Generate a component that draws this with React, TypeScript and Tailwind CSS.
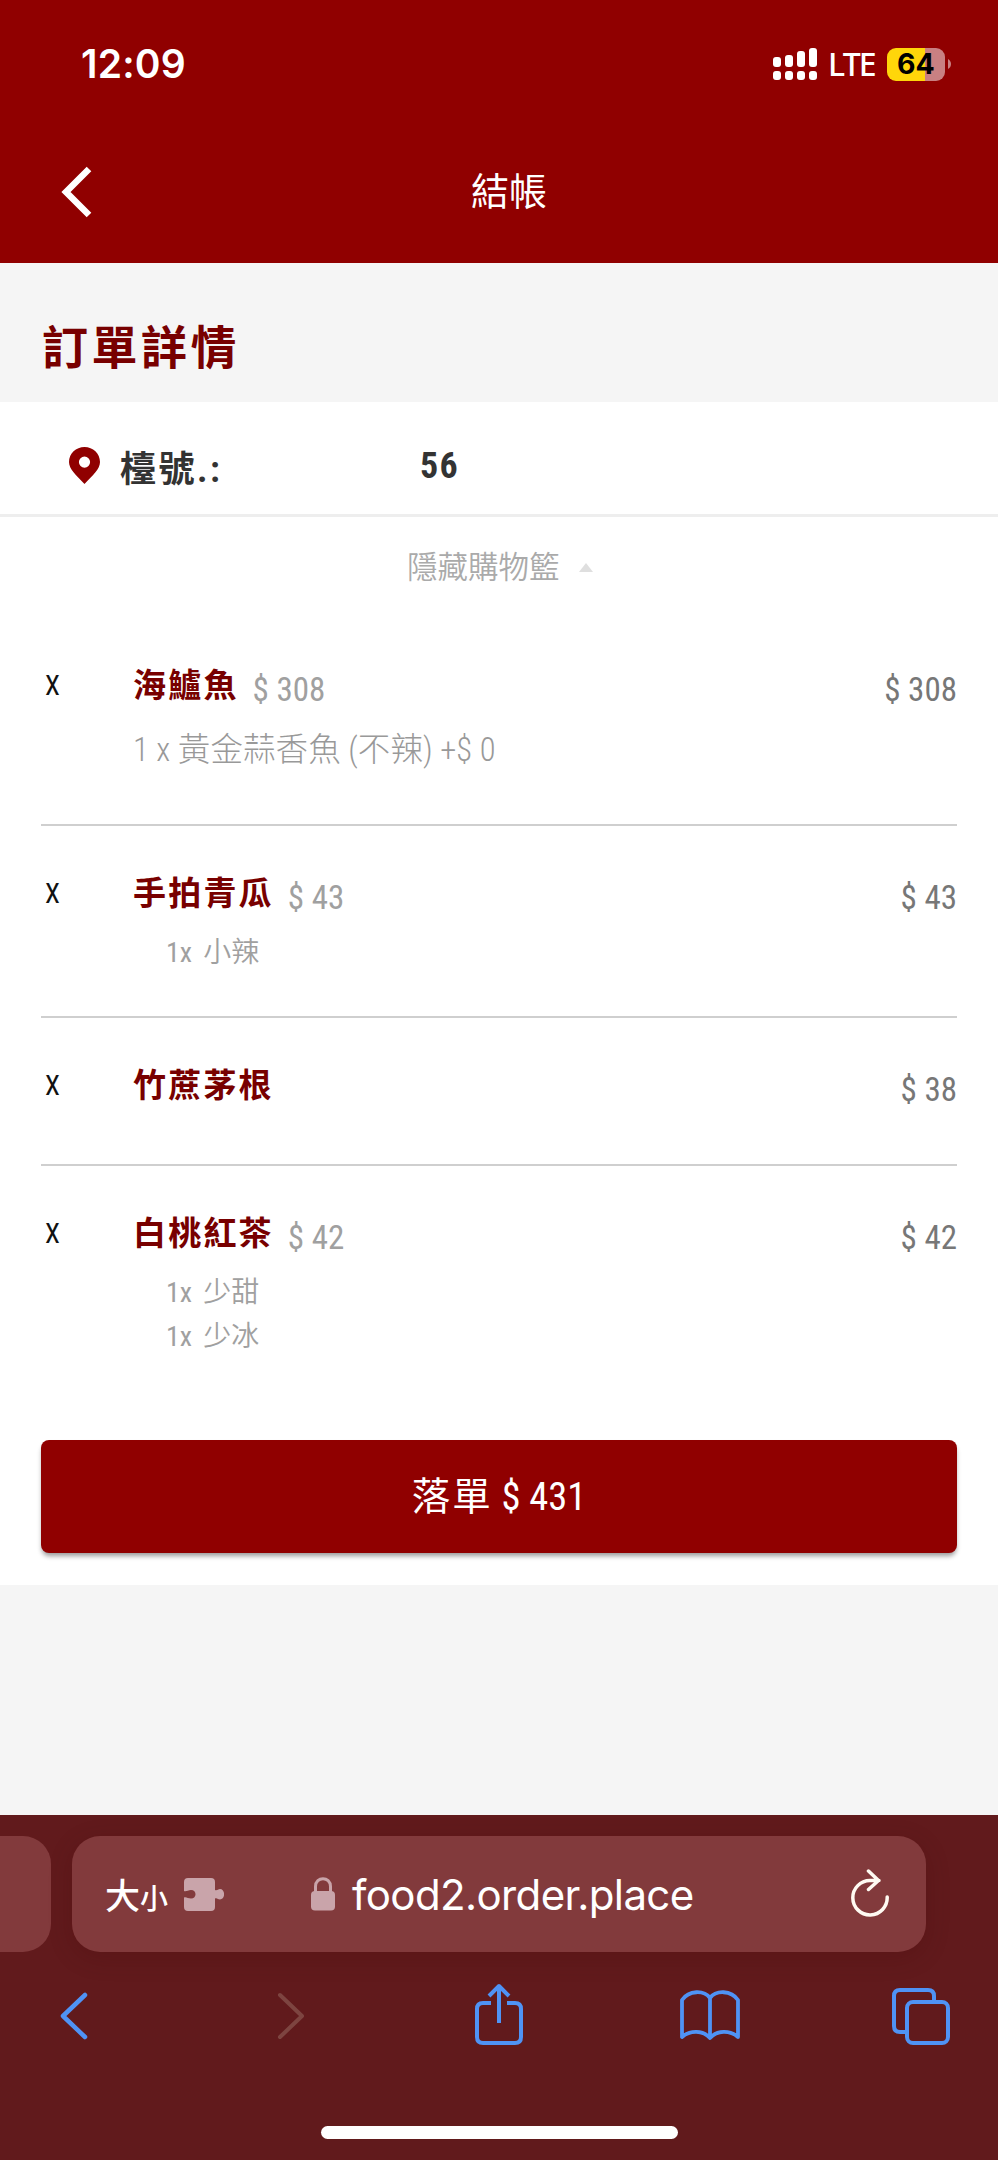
import React from 'react';

interface OrderItem {
  name: string;
  unitPrice?: string;
  total: string;
  note?: string;
  options?: string[];
}

const items: OrderItem[] = [
  { name: '海鱸魚', unitPrice: '$ 308', total: '$ 308', note: '1 x 黃金蒜香魚 (不辣) +$ 0' },
  { name: '手拍青瓜', unitPrice: '$ 43', total: '$ 43', options: ['小辣'] },
  { name: '竹蔗茅根', total: '$ 38' },
  { name: '白桃紅茶', unitPrice: '$ 42', total: '$ 42', options: ['少甜', '少冰'] },
];

// Signal columns: top of each upper bar inside the 32px tall icon
const signalBars = [9, 7, 3, 0];

function StatusBar() {
  return (
    <div className="flex h-[128px] items-center justify-between pl-[81px] pr-[47px] font-['Inter',sans-serif]">
      <span className="mb-[2px] text-[39px] font-semibold leading-none tracking-[0.2px]">12:09</span>
      <div className="flex items-center">
        <svg width="44" height="32" viewBox="0 0 44 32" fill="white">
          {signalBars.map((top, i) => (
            <g key={top}>
              <rect x={i * 12} y={top} width="8" height={19 - top} rx="3" />
              <rect x={i * 12} y="23" width="8" height="9" rx="3" />
            </g>
          ))}
        </svg>
        <span className="ml-[11px] w-[59px] font-['Noto_Sans',sans-serif] text-[32px] font-medium leading-none tracking-[-1.8px]">LTE</span>
        <div className="flex h-[33px] w-[58px] items-center justify-center rounded-[9px] bg-[linear-gradient(90deg,#ffd60a_65%,#c98082_65%)]">
          <span className="text-[28.5px] font-bold leading-none text-black">64</span>
        </div>
        <svg className="ml-[3px]" width="3" height="10" viewBox="0 0 3 10" fill="#c98082">
          <path d="M0 0C4 2 4 8 0 10Z" />
        </svg>
      </div>
    </div>
  );
}

function OrderRow({ item }: { item: OrderItem }) {
  return (
    <div className="flex border-b-2 border-[#cfcfcf] pb-[42px] pt-[42px] last:border-b-0">
      <div className="w-[92px] pl-[4px] text-[27px] leading-[52px] text-[#111]">X</div>
      <div className="flex-1">
        <div className="mb-[14px] flex h-12 items-center">
          <span className="mt-[2px] text-[33px] font-bold leading-none tracking-[2.2px] text-[#780000]">{item.name}</span>
          {item.unitPrice && (
            <span className="ml-[14px] mt-[10px] text-[33px] leading-none text-[#a0a0a0]">{item.unitPrice}</span>
          )}
        </div>
        {item.note && (
          <div className="mb-[10px] mt-[20px] text-[32.5px] font-light leading-[44px] tracking-[0.1px] text-[#999]">{item.note}</div>
        )}
        {item.options?.map((option) => (
          <div key={option} className="flex h-11 gap-[11px] pl-[33px] pt-px text-[28px] leading-[44px] text-[#a0a0a0]">
            <span>1x</span>
            <span className="font-[350]">{option}</span>
          </div>
        ))}
      </div>
      <div className="mt-[6px] h-12 text-[33px] leading-[48px] text-[#777]">{item.total}</div>
    </div>
  );
}

function AddressBar() {
  return (
    <div className="flex h-[116px] gap-[21px]">
      <div className="w-[51px] rounded-r-[28px] bg-[#823a3c]" />
      <div className="flex w-[854px] items-center rounded-[28px] bg-[#823a3c] pr-[36px] text-white shadow-[0_6px_24px_rgba(60,0,4,0.18)]">
        <div className="-mt-[2px] ml-[33px] flex w-[79px] items-baseline font-['Noto_Sans_CJK_TC',sans-serif] font-medium leading-none">
          <span className="text-[35px]">大</span>
          <span className="text-[28px]">小</span>
        </div>
        <svg width="40" height="33" viewBox="0 0 40 33" fill="#c9a4aa">
          <path d="M4 0H27Q31 0 31 4V12C33 13 34 11 36 11C41.500 11 41.500 21.500 36 21.500C34 21.500 33 19.500 31 20.500V29Q31 33 27 33H4Q0 33 0 29V19.500C2 18.500 4 20.500 7 20.500C13 20.500 13 12 7 12C4 12 2 14 0 13V4Q0 0 4 0Z" />
        </svg>
        <svg className="ml-[87px]" width="24" height="34" viewBox="0 0 24 34" fill="none">
          <path d="M4.500 16V9.500C4.500 -1 19.500 -1 19.500 9.500V16" stroke="#c9a4aa" strokeWidth="3" />
          <rect y="14" width="24" height="19.500" rx="4" fill="#c9a4aa" />
        </svg>
        <span className="ml-[17px] mt-[2px] font-['Inter',sans-serif] text-[42px] leading-none tracking-[-0.6px]">
          food2.order.place
        </span>
        <svg className="-mt-[2px] ml-auto" width="40" height="48" viewBox="0 0 40 48" fill="none" stroke="#fffaf2" strokeWidth="3.500" strokeLinecap="round" strokeLinejoin="round">
          <path d="M29 11.500H20A17.200 17.200 0 1 0 37.200 28M18.500 2L28.500 11.500L18.500 20.500" />
        </svg>
      </div>
    </div>
  );
}

function Toolbar() {
  return (
    <div className="flex items-center pt-[30px] pl-[59px] text-[#4f93f5]">
      <svg width="30" height="66" viewBox="0 0 30 66" fill="none" stroke="currentColor" strokeWidth="4.500" strokeLinecap="round" strokeLinejoin="round">
        <path d="M26 13L4 34L26 55" />
      </svg>
      <svg className="ml-[187px]" width="30" height="66" viewBox="0 0 30 66" fill="none" stroke="#7d4440" strokeWidth="4" strokeLinecap="round" strokeLinejoin="round">
        <path d="M4 13L26 34L4 55" />
      </svg>
      <svg className="ml-[167px]" width="52" height="66" viewBox="0 0 52 66" fill="none" stroke="currentColor" strokeWidth="4">
        <path d="M18 21H10Q4 21 4 27V55Q4 61 10 61H42Q48 61 48 55V27Q48 21 42 21H34" />
        <path d="M26 41V4M16 14L26 4L36 14" strokeLinejoin="round" />
      </svg>
      <svg className="ml-[153px]" width="64" height="66" viewBox="0 0 64 66" fill="none" stroke="currentColor" strokeWidth="3.800" strokeLinejoin="round">
        <path d="M32 56C25 48 12 48 4 55V18C11 8 26 8 32 16C38 8 53 8 60 18V55C52 48 39 48 32 56ZM32 16V56" />
      </svg>
      <svg className="ml-[149px]" width="60" height="66" viewBox="0 0 60 66" fill="none" stroke="currentColor" strokeWidth="4">
        <path d="M43 20V14Q43 8 37 8H9Q3 8 3 14V44Q3 50 9 50H16" />
        <rect x="16" y="20" width="41" height="41" rx="6" />
      </svg>
    </div>
  );
}

export default function App() {
  return (
    <div lang="zh-Hant" className="flex h-[2160px] w-[998px] flex-col overflow-hidden bg-[#f5f5f5] font-['Roboto_Condensed','Noto_Sans_CJK_TC',sans-serif]">
      <header className="h-[263px] shrink-0 bg-[#900000] text-white">
        <StatusBar />
        <div className="flex h-[128px] items-center">
          <svg className="ml-[59px]" width="36" height="56" viewBox="0 0 36 56" fill="none" stroke="white" strokeWidth="6.500">
            <path d="M30 5L7 28L30 51" />
          </svg>
          <h1 className="ml-[376px] text-[38px] leading-none">結帳</h1>
        </div>
      </header>

      <div className="flex h-[139px] items-center pl-[42px] pt-[31px]">
        <h2 className="text-[46px] font-bold leading-none tracking-[3.5px] text-[#780000]">訂單詳情</h2>
      </div>

      <main className="h-[1183px] bg-white">
        {/* Table number */}
        <div className="flex h-[115px] items-center border-b-[3px] border-[#eee] pl-[69px] pt-[15px] font-bold text-[#333]">
          <svg width="31" height="37" viewBox="0 0 31 37" fill="#900000">
            <path fillRule="evenodd" d="M15.500 0C7 0 0 6.500 0 15C0 22 7 28 15.500 37C24 28 31 22 31 15C31 6.500 24 0 15.500 0ZM15.500 9.500A5.600 5.600 0 1 1 15.500 20.700A5.600 5.600 0 1 1 15.500 9.500Z" />
          </svg>
          <span className="ml-5 mt-[9px] w-[300px] text-[36px] leading-none tracking-[2.500px]">檯號.:</span>
          <span className="mt-px text-[36px] leading-none tracking-[1.300px]">56</span>
        </div>

        <button className="flex h-[101px] w-full items-center pl-[407px] pt-px text-[30.5px] font-[350] text-[#aaa]">
          <span>隱藏購物籃</span>
          <svg className="-mt-[2px] ml-[19px]" width="14" height="9" viewBox="0 0 14 9" fill="#dfdfdf">
            <path d="M7 0L14 9H0Z" />
          </svg>
        </button>

        <div className="mx-[41px]">
          {items.map((item) => (
            <OrderRow key={item.name} item={item} />
          ))}
        </div>

        <button className="mx-[41px] mt-10 h-[113px] w-[916px] rounded-lg bg-[#900000] text-[38.5px] text-white shadow-[0_4px_5px_-1px_rgba(0,0,0,0.4)]">
          <span className="tracking-[2px]">落單</span> $ 431
        </button>
      </main>

      {/* Browser chrome */}
      <footer className="mt-auto h-[345px] shrink-0 bg-[#611a1c] pt-[21px]">
        <AddressBar />
        <Toolbar />
        <div className="mx-auto mt-[78px] h-[13px] w-[357px] rounded-full bg-white" />
      </footer>
    </div>
  );
}
